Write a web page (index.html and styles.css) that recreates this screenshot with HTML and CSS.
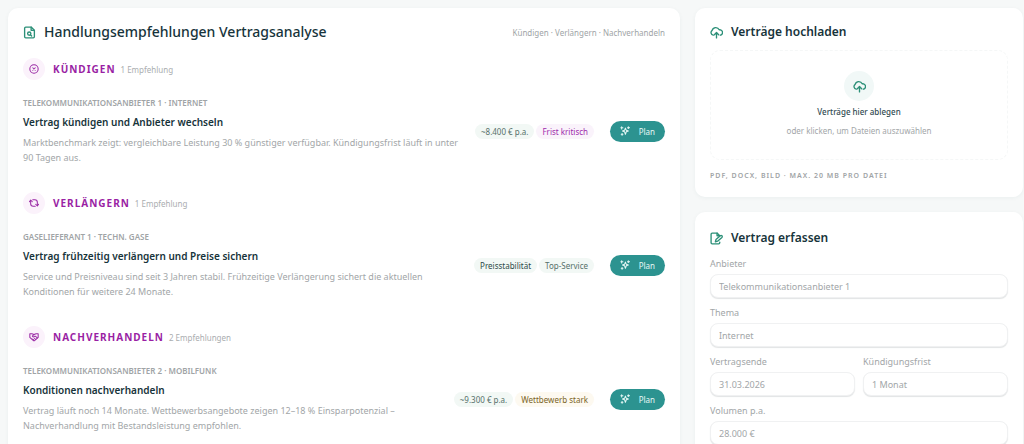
FILE: index.html
```html
<!DOCTYPE html>
<html lang="de">
<head>
<meta charset="utf-8">
<meta name="viewport" content="width=device-width, initial-scale=1">
<title>Vertragsanalyse</title>
<link rel="stylesheet" href="styles.css">
</head>
<body>
<svg class="sprite" aria-hidden="true">
  <symbol id="file-search" viewBox="0 0 24 24"><path d="M15 2H5a2 2 0 0 0-2 2v16a2 2 0 0 0 2 2h14a2 2 0 0 0 2-2V8Z"/><path d="M15 2v6h6"/><circle cx="11.500" cy="14" r="3"/><path d="m14 16.500 2 2"/></symbol>
  <symbol id="cancel" viewBox="0 0 24 24"><circle cx="12" cy="12" r="10"/><path d="m9 9 6 6M15 9l-6 6"/></symbol>
  <symbol id="renew" viewBox="0 0 24 24"><path d="M9 4h5a6 6 0 0 1 6 6v7"/><path d="m16 15 4 4 3-4"/><path d="M15 20h-5a6 6 0 0 1-6-6V6"/><path d="m1 9 3-4 4 4"/></symbol>
  <symbol id="handshake" viewBox="0 0 24 24"><path d="M2 4h5l5 2 5-2h5v9l-8 7a3 3 0 0 1-4 0l-8-7Z"/><path d="m12 6-4 4c1 3 4 2 5 0h2l5 4M13 15l3 3M9 17l2 2"/></symbol>
  <symbol id="sparkles" viewBox="0 0 24 24"><path d="m13 5 2 5 5 2-5 2-2 6-2-6-5-2 5-2Z"/><path d="M4 2v5M2 4h5M20 2v4M18 4h5M5 18v4M3 20h4"/></symbol>
  <symbol id="cloud-upload" viewBox="0 0 24 24"><path d="M6 17a5 5 0 0 1-2-9 7 7 0 0 1 13-1 5 5 0 0 1 2 10"/><path d="M12 22v-9M8 16l4-4 4 4"/></symbol>
  <symbol id="file-edit" viewBox="0 0 24 24"><path d="M18 19v1a2 2 0 0 1-2 2H4a2 2 0 0 1-2-2V4a2 2 0 0 1 2-2h9l5 5"/><path d="M13 2v5h5"/><path d="m10 18 1-4 8-7a2 2 0 0 1 3 3l-8 7Z"/></symbol>
</svg>

<main class="layout">
  <section class="card">
    <header class="card-head">
      <svg class="icon icon-title"><use href="#file-search"/></svg>
      <h1 class="title title-main">Handlungsempfehlungen Vertragsanalyse</h1>
      <span class="hint">Kündigen · Verlängern · Nachverhandeln</span>
    </header>

    <section class="group">
      <header class="group-head">
        <span class="bubble"><svg class="icon"><use href="#cancel"/></svg></span>
        <h2 class="group-title">Kündigen</h2>
        <span class="count">1 Empfehlung</span>
      </header>
      <article class="item">
        <div class="item-text">
          <p class="eyebrow">Telekommunikationsanbieter 1 · Internet</p>
          <h3 class="item-title">Vertrag kündigen und Anbieter wechseln</h3>
          <p class="desc">Marktbenchmark zeigt: vergleichbare Leistung 30 % günstiger verfügbar. Kündigungsfrist läuft in unter 90&nbsp;Tagen aus.</p>
        </div>
        <div class="tags"><span class="tag">~8.400 € p.a.</span><span class="tag tag-critical">Frist kritisch</span></div>
        <button class="plan" type="button"><svg class="icon"><use href="#sparkles"/></svg>Plan</button>
      </article>
    </section>

    <section class="group">
      <header class="group-head">
        <span class="bubble"><svg class="icon"><use href="#renew"/></svg></span>
        <h2 class="group-title">Verlängern</h2>
        <span class="count">1 Empfehlung</span>
      </header>
      <article class="item">
        <div class="item-text">
          <p class="eyebrow">Gaselieferant 1 · Techn. Gase</p>
          <h3 class="item-title">Vertrag frühzeitig verlängern und Preise sichern</h3>
          <p class="desc">Service und Preisniveau sind seit 3 Jahren stabil. Frühzeitige Verlängerung sichert die aktuellen Konditionen für weitere 24 Monate.</p>
        </div>
        <div class="tags"><span class="tag tag-strong">Preisstabilität</span><span class="tag">Top-Service</span></div>
        <button class="plan" type="button"><svg class="icon"><use href="#sparkles"/></svg>Plan</button>
      </article>
    </section>

    <section class="group">
      <header class="group-head">
        <span class="bubble"><svg class="icon"><use href="#handshake"/></svg></span>
        <h2 class="group-title">Nachverhandeln</h2>
        <span class="count">2 Empfehlungen</span>
      </header>
      <article class="item">
        <div class="item-text">
          <p class="eyebrow">Telekommunikationsanbieter 2 · Mobilfunk</p>
          <h3 class="item-title">Konditionen nachverhandeln</h3>
          <p class="desc">Vertrag läuft noch 14 Monate. Wettbewerbsangebote zeigen 12–18 % Einsparpotenzial – Nachverhandlung mit Bestandsleistung empfohlen.</p>
        </div>
        <div class="tags"><span class="tag">~9.300 € p.a.</span><span class="tag tag-warm">Wettbewerb stark</span></div>
        <button class="plan" type="button"><svg class="icon"><use href="#sparkles"/></svg>Plan</button>
      </article>
    </section>
  </section>

  <div class="side">
    <section class="card">
      <header class="card-head">
        <svg class="icon icon-title"><use href="#cloud-upload"/></svg>
        <h2 class="title">Verträge hochladen</h2>
      </header>
      <button class="dropzone" type="button">
        <span class="drop-icon"><svg class="icon icon-title"><use href="#cloud-upload"/></svg></span>
        <span class="drop-title">Verträge hier ablegen</span>
        <span class="drop-sub">oder klicken, um Dateien auszuwählen</span>
      </button>
      <p class="formats">PDF, DOCX, Bild · max. 20 MB pro Datei</p>
    </section>

    <section class="card card-form">
      <header class="card-head">
        <svg class="icon icon-title"><use href="#file-edit"/></svg>
        <h2 class="title">Vertrag erfassen</h2>
      </header>
      <form class="form">
        <label class="field wide">Anbieter<input type="text" placeholder="Telekommunikationsanbieter 1"></label>
        <label class="field wide">Thema<input type="text" placeholder="Internet"></label>
        <label class="field">Vertragsende<input type="text" placeholder="31.03.2026"></label>
        <label class="field">Kündigungsfrist<input type="text" placeholder="1 Monat"></label>
        <label class="field wide">Volumen p.a.<input type="text" placeholder="28.000 €"></label>
      </form>
    </section>
  </div>
</main>
</body>
</html>
```
FILE: styles.css
```css
* { box-sizing: border-box; }
html { overflow: hidden; }
body {
  margin: 0;
  background: #f6f8f8;
  color: #17343b;
  font-family: "Noto Sans", "Open Sans", sans-serif;
  font-size: 8px;
}
h1, h2, h3, p { margin: 0; }
button, input { font: inherit; }
.sprite { display: none; }

.layout {
  display: grid;
  grid-template-columns: minmax(0, 672fr) minmax(0, 328fr);
  gap: 15px;
  padding: 8px 1px 0 8px;
}
.side { display: flex; flex-direction: column; gap: 15px; }
.card {
  padding: 15px;
  background: #fff;
  border-radius: 10px;
  box-shadow: 0 1px 4px rgba(20, 70, 70, 0.05);
}
.card-form { padding-top: 17px; }
.card-head { display: flex; align-items: center; gap: 8px; height: 18px; }
.title { font-size: 12px; line-height: 18px; font-weight: 600; }
.title-main { font-size: 14px; font-weight: 500; }
.hint { margin-left: auto; color: #a0a4a6; }

.icon {
  width: 10px;
  height: 10px;
  flex: none;
  fill: none;
  stroke: currentColor;
  stroke-width: 2.5;
  stroke-linecap: round;
  stroke-linejoin: round;
}
.icon-title { width: 13px; height: 13px; color: #2c9078; }

.group { padding-top: 16px; height: 134px; }
.group-head { display: flex; align-items: center; height: 24px; }
.bubble {
  display: grid;
  place-items: center;
  width: 22px;
  height: 22px;
  margin-right: 8px;
  border-radius: 50%;
  background: #fbf2fb;
  color: #9a2aa5;
}
.group-title {
  color: #9a1fa4;
  font-size: 10px;
  font-weight: 700;
  letter-spacing: 1px;
  text-transform: uppercase;
}
.count { margin-left: 5px; color: #aaadaf; }

.item { display: flex; align-items: center; margin-top: 16px; }
.item-text { flex: 1; min-width: 0; }
.eyebrow {
  color: #a0a4a6;
  line-height: 12px;
  font-weight: 600;
  text-transform: uppercase;
}
.item-title { margin-top: 4px; font-size: 10px; line-height: 18px; font-weight: 600; }
.desc { margin-top: 4px; color: #a2a6a8; font-size: 9px; line-height: 15px; }
.tags { display: flex; gap: 2px; margin: 0 16px 0 8px; }
.tag {
  padding: 0 6px;
  border-radius: 8px;
  background: #f2f8f5;
  color: #56706a;
  line-height: 15px;
}
.tag-strong { color: #2b4a48; }
.tag-critical { background: #faf3fb; color: #a02bac; }
.tag-warm { background: #fdf9f0; color: #7b6425; }
.plan {
  display: flex;
  align-items: center;
  justify-content: space-between;
  width: 55px;
  height: 21px;
  padding: 0 10px;
  border: 0;
  border-radius: 11px;
  background: #2c9390;
  color: #e6f8f5;
}

.dropzone {
  display: flex;
  flex-direction: column;
  align-items: center;
  width: 100%;
  height: 110px;
  margin-top: 9px;
  padding: 20px 0 0;
  border: 1px dashed #f5f7f7;
  border-radius: 10px;
  background: #fff;
}
.drop-icon {
  display: grid;
  place-items: center;
  width: 30px;
  height: 30px;
  border-radius: 50%;
  background: #f1f8f7;
}
.drop-title { margin-top: 3px; color: #304a50; line-height: 16px; font-weight: 500; }
.drop-sub { margin-top: 3px; color: #a2a6a8; line-height: 16px; }
.formats {
  margin-top: 10px;
  color: #a0a4a6;
  font-size: 7px;
  line-height: 12px;
  font-weight: 600;
  letter-spacing: 1px;
  text-transform: uppercase;
}

.form { display: grid; grid-template-columns: 1fr 1fr; gap: 8px; margin-top: 10px; }
.field { color: #a2a6a8; font-size: 9px; line-height: 13px; }
.wide { grid-column: 1 / -1; }
.field input {
  display: block;
  width: 100%;
  height: 24px;
  margin-top: 4px;
  padding: 0 8px;
  border: 1px solid #f0f1f2;
  border-radius: 8px;
  background: #fff;
  box-shadow: 0 1px 1px #e2e4e5;
}
.field input::placeholder { color: #a2a6a8; opacity: 1; }
```
